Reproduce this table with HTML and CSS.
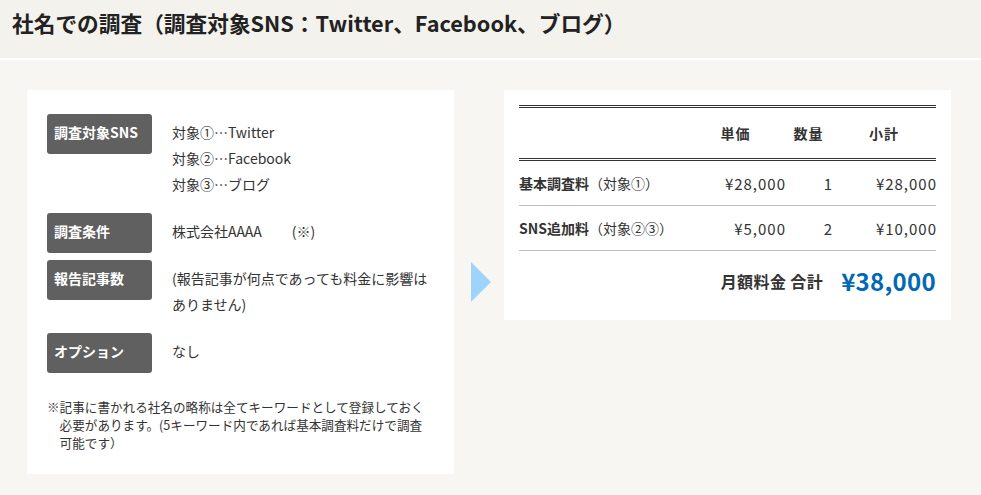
FILE: index.html
```html
<!DOCTYPE html>
<html lang="ja">
<head>
<meta charset="utf-8">
<title>社名での調査</title>
<link rel="stylesheet" href="styles.css">
</head>
<body>
<header class="page-head">
  <h1 class="page-title">社名での調査（調査対象SNS：Twitter、Facebook、ブログ）</h1>
</header>
<main class="content">
  <section class="card spec">
    <div class="spec-row">
      <div class="spec-label">調査対象SNS</div>
      <div class="spec-value">対象①…Twitter<br>対象②…Facebook<br>対象③…ブログ</div>
    </div>
    <div class="spec-row">
      <div class="spec-label">調査条件</div>
      <div class="spec-value">株式会社AAAA<span class="mark">(※)</span></div>
    </div>
    <div class="spec-row">
      <div class="spec-label">報告記事数</div>
      <div class="spec-value">(報告記事が何点であっても料金に影響はありません)</div>
    </div>
    <div class="spec-row">
      <div class="spec-label">オプション</div>
      <div class="spec-value">なし</div>
    </div>
    <p class="note">※記事に書かれる社名の略称は全てキーワードとして登録しておく必要があります。(5キーワード内であれば基本調査料だけで調査可能です）</p>
  </section>
  <div class="arrow"></div>
  <section class="card price">
    <div class="price-table">
      <div class="price-head">
        <div></div>
        <div class="th">単価</div>
        <div class="th">数量</div>
        <div class="th">小計</div>
      </div>
      <div class="price-row">
        <div class="item"><b>基本調査料</b>（対象①）</div>
        <div class="num">¥28,000</div>
        <div class="num">1</div>
        <div class="num">¥28,000</div>
      </div>
      <div class="price-row">
        <div class="item"><b>SNS追加料</b>（対象②③）</div>
        <div class="num">¥5,000</div>
        <div class="num">2</div>
        <div class="num">¥10,000</div>
      </div>
      <div class="price-total">
        <span class="total-label">月額料金 合計</span>
        <span class="total-value">¥38,000</span>
      </div>
    </div>
  </section>
</main>
</body>
</html>
```
FILE: styles.css
```css
* { box-sizing: border-box; }
html, body {
  margin: 0;
  padding: 0;
}
body {
  background: #f7f6f2;
  color: #333;
  font-family: "Noto Sans CJK JP", "Noto Sans", sans-serif;
  height: 495px;
  overflow: hidden;
}
.page-head {
  background: #f3f2ec;
  height: 60px;
  border-bottom: 2px solid #ffffff;
  padding: 11px 12px 0;
}
.page-title {
  margin: 0;
  font-size: 21.7px;
  font-weight: bold;
  color: #222;
  line-height: 24px;
}
.content {
  display: flex;
  align-items: flex-start;
  padding: 30px 0 0 27px;
}
.card {
  background: #fff;
}
.spec {
  width: 427px;
  padding: 24px 20px 22px 20px;
}
.spec-row {
  display: flex;
  gap: 20px;
  margin-bottom: 7px;
}
.spec-label {
  flex: 0 0 105px;
  height: 40px;
  background: #606060;
  color: #fff;
  border-radius: 3px;
  font-size: 14px;
  font-weight: bold;
  line-height: 37px;
  padding-left: 7px;
}
.spec-value {
  flex: 1;
  font-size: 14px;
  line-height: 26px;
  padding: 5px 0 9px;
}
.mark {
  margin-left: 30px;
}
.note {
  margin: 25px 0 0;
  font-size: 12.6px;
  line-height: 18px;
  padding-left: 12.6px;
  text-indent: -12.6px;
}
.arrow {
  align-self: center;
  width: 0;
  height: 0;
  border-top: 20px solid transparent;
  border-bottom: 20px solid transparent;
  border-left: 20px solid #9dd3fd;
  margin: 0 13px 0 17px;
}
.price {
  width: 447px;
  height: 230px;
  padding: 15px;
}
.price-head,
.price-row {
  display: grid;
  grid-template-columns: 167px 99px 47px 104px;
  align-items: center;
}
.price-head {
  border-top: 3px double #333;
  border-bottom: 3px double #333;
  height: 56px;
  font-size: 14px;
  font-weight: bold;
}
.th {
  text-align: center;
  letter-spacing: 1px;
}
.price-row {
  height: 45px;
  border-bottom: 1px solid #bbb;
  font-size: 14px;
}
.item b {
  font-weight: bold;
}
.num {
  text-align: right;
  font-size: 15px;
  letter-spacing: 1px;
  margin-right: -1px;
}
.price-total {
  display: flex;
  justify-content: flex-end;
  align-items: center;
  height: 59px;
  gap: 18px;
}
.total-label {
  font-size: 16px;
  font-weight: bold;
  letter-spacing: 0.4px;
}
.total-value {
  font-size: 24px;
  font-weight: bold;
  color: #0068b5;
  letter-spacing: 0.3px;
}
```
